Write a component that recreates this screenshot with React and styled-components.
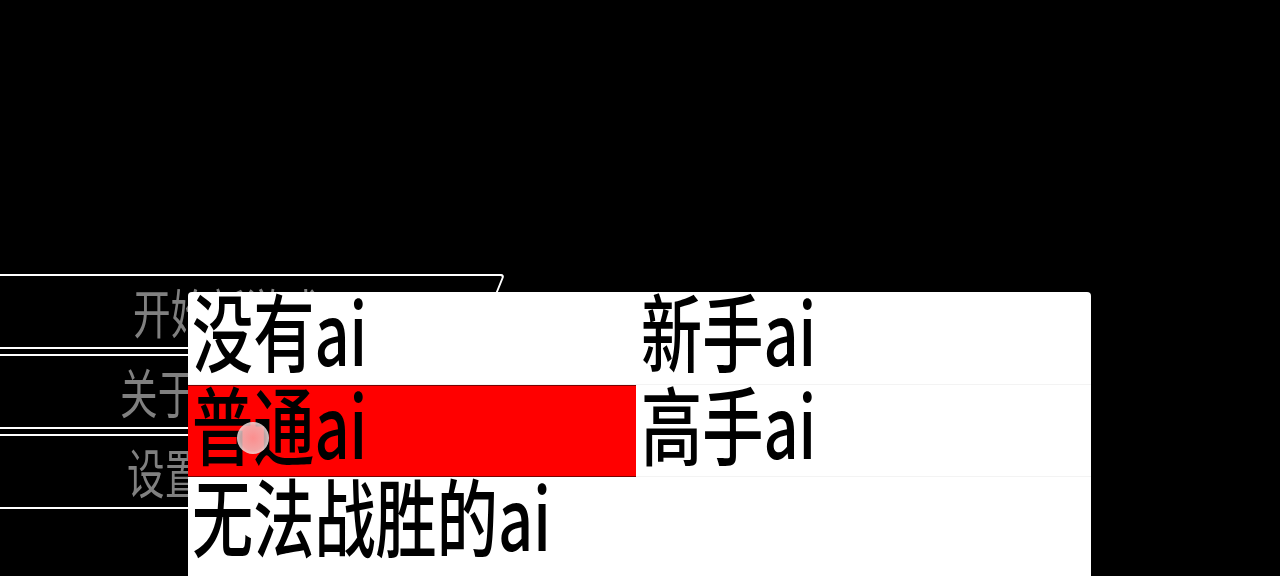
import React from "react";
import styled, { createGlobalStyle } from "styled-components";

const Global = createGlobalStyle`
  html, body { margin: 0; padding: 0; background: #000; overflow: hidden; }
  #root { width: 1280px; height: 576px; }
`;

const Screen = styled.div`
  position: relative;
  width: 1280px;
  height: 576px;
  overflow: hidden;
  background: #000;
  font-family: "Noto Sans CJK SC", "Noto Sans", sans-serif;
`;

const Menu = styled.div`
  display: flex;
  flex-direction: column;
  gap: 5px;
  padding-top: 274px;
`;

const MenuButton = styled.div`
  position: relative;
  height: 75px;
  width: ${(p) => p.$width}px;
  margin-left: -60px;
  padding-left: ${(p) => p.$textLeft + 60}px;
  box-sizing: border-box;
  display: flex;
  align-items: center;
  &::before {
    content: "";
    position: absolute;
    inset: 0;
    border: 2px solid #fff;
    border-radius: 4px;
    transform: skewX(-22deg);
  }
`;

const MenuLabel = styled.span`
  display: inline-block;
  color: #808080;
  font-size: 53px;
  line-height: 1;
  transform: scaleX(0.71);
  transform-origin: left center;
  white-space: nowrap;
`;

const Popup = styled.div`
  position: absolute;
  left: 188px;
  top: 292px;
  width: 903px;
  height: 310px;
  background: #fff;
  border-radius: 4px;
  display: grid;
  grid-template-columns: 448px 455px;
  grid-template-rows: 93px 92px 1fr;
`;

const Option = styled.div`
  position: relative;
  background: ${(p) => (p.$active ? "#ff0000" : "transparent")};
  border-top: ${(p) => (p.$active ? "1px solid #7a0000" : "1px solid transparent")};
  border-bottom: 1px solid ${(p) => (p.$active ? "#7a0000" : "#f3f3f3")};
  box-sizing: border-box;
  padding-left: ${(p) => p.$pad}px;
`;

const OptionLabel = styled.span`
  display: inline-block;
  color: #000;
  font-size: 85px;
  font-weight: 500;
  line-height: 71px;
  transform: scaleX(0.72);
  transform-origin: left top;
  white-space: nowrap;
`;

const Touch = styled.div`
  position: absolute;
  left: 237px;
  top: 422px;
  width: 32px;
  height: 32px;
  border-radius: 50%;
  background: radial-gradient(circle, rgba(250, 190, 190, 0.75) 0%, rgba(240, 205, 205, 0.8) 55%, rgba(235, 235, 235, 0.92) 82%, rgba(255, 255, 255, 0) 100%);
  filter: blur(0.6px);
`;

const menuItems = [
  { label: "开始新游戏", width: 550, left: 133 },
  { label: "关于游戏", width: 540, left: 120 },
  { label: "设置", width: 520, left: 127 },
];

const options = [
  { label: "没有ai", pad: 4 },
  { label: "新手ai", pad: 5 },
  { label: "普通ai", pad: 4, active: true },
  { label: "高手ai", pad: 5 },
  { label: "无法战胜的ai", pad: 4 },
];

export default function App() {
  return (
    <Screen>
      <Global />
      <Menu>
        {menuItems.map((m) => (
          <MenuButton key={m.label} $width={m.width} $textLeft={m.left}>
            <MenuLabel>{m.label}</MenuLabel>
          </MenuButton>
        ))}
      </Menu>
      <Popup>
        {options.map((o) => (
          <Option key={o.label} $active={o.active} $pad={o.pad}>
            <OptionLabel>{o.label}</OptionLabel>
          </Option>
        ))}
      </Popup>
      <Touch />
    </Screen>
  );
}
